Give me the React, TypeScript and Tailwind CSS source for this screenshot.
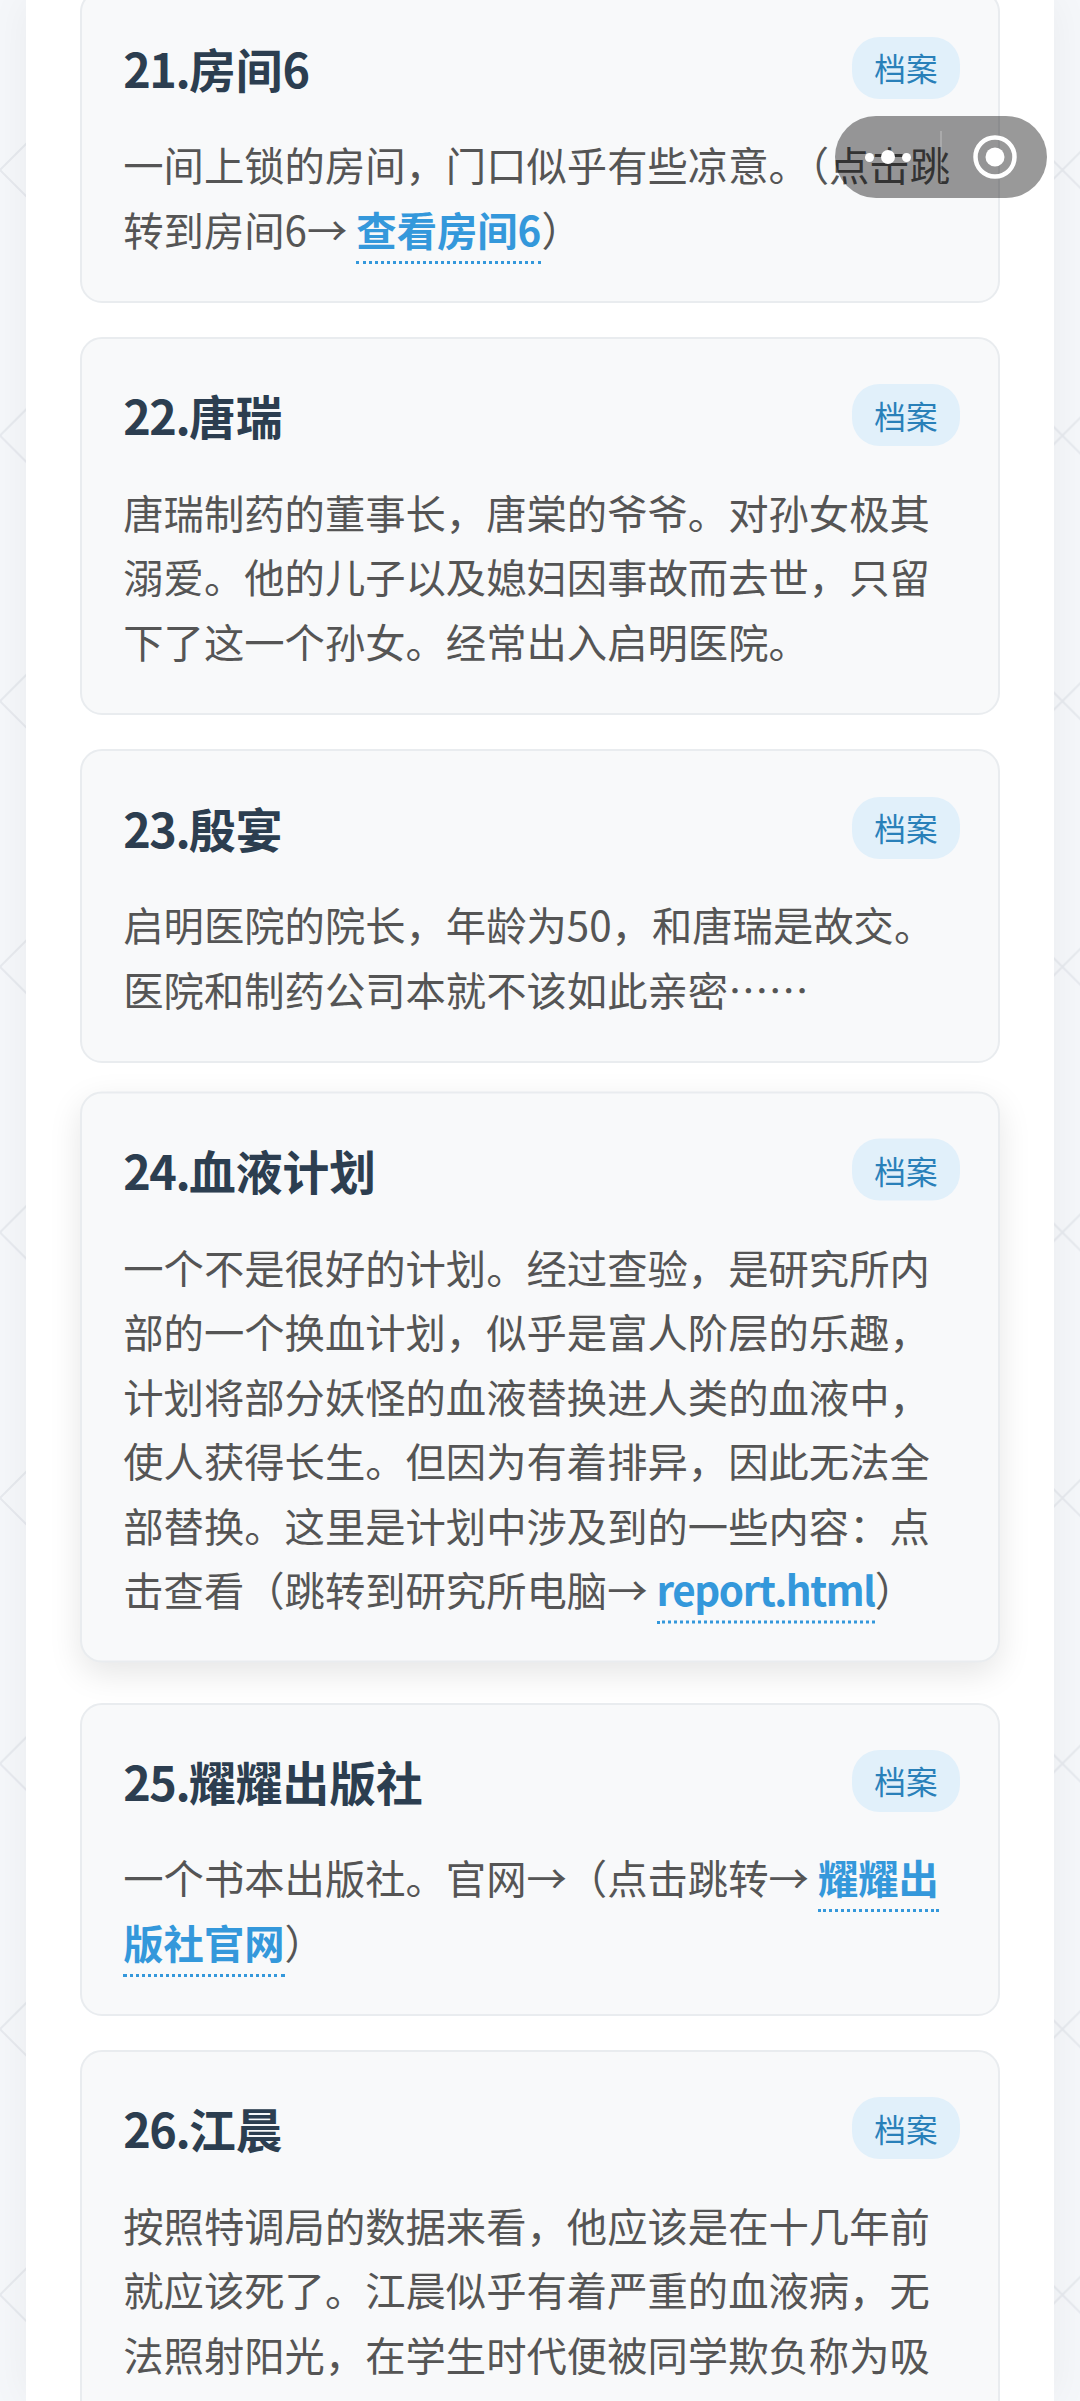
import type { ReactNode } from "react";

const font = "font-['Noto_Sans_CJK_SC','Noto_Sans',sans-serif]";

function Lnk({ children }: { children: ReactNode }) {
  return <span className="font-bold text-[#3498db] border-b-[3px] pb-[3px] border-dotted border-[#3498db]">{children}</span>;
}

function Card({ no, title, children, hover }: { no: string; title: string; children: ReactNode; hover?: boolean }) {
  return (
    <div
      className={
        hover
          ? "rounded-[22px] border-[2.75px] border-[#e9ecef] bg-[#f8f9fa] pl-[41.25px] pr-[38.5px] pt-[41.25px] pb-[39.5px] -translate-y-[5.5px] shadow-[0_11px_33px_rgba(0,0,0,0.1)]"
          : "rounded-[22px] border-[2.75px] border-[#e9ecef] bg-[#f8f9fa] pl-[41.25px] pr-[38.5px] pt-[41.25px] pb-[39.5px]"
      }
    >
      <div className="flex items-center justify-between mb-[29.5px]">
        <h3 className="text-[46.75px] leading-[70px] font-bold text-[#2c3e50]">
          <span className="tracking-[-1.5px]">{no}</span>
          {title}
        </h3>
        <span className="shrink-0 rounded-[27.5px] bg-[#e1f0fa] px-[22px] py-[5.5px] text-[31.6px] leading-[51px] text-[#2980b9]">档案</span>
      </div>
      <p className="text-[40.33px] leading-[64.5px] text-[#555555]">{children}</p>
    </div>
  );
}

function Capsule() {
  return (
    <div className="absolute left-[835px] top-[116px] flex h-[82px] w-[212px] items-center rounded-[41px] bg-black/40">
      <div className="flex w-[105px] items-center justify-center gap-[7px]">
        <span className="h-[9px] w-[9px] rounded-full bg-white" />
        <span className="h-[14px] w-[14px] rounded-full bg-white" />
        <span className="h-[9px] w-[9px] rounded-full bg-white" />
      </div>
      <span className="h-[52px] w-[1.5px] bg-white/20" />
      <svg width="46" height="46" viewBox="0 0 46 46" className="ml-[30px]">
        <circle cx="23" cy="23" r="19.5" fill="none" stroke="#fff" strokeWidth="4.5" />
        <circle cx="23" cy="23" r="9.5" fill="#fff" />
      </svg>
    </div>
  );
}

export default function App() {
  return (
    <div className={`relative h-[2401px] w-[1080px] overflow-hidden bg-[#f5f7fa] ${font}`}>
      <svg className="absolute inset-0" width="1080" height="2401">
        <defs>
          <pattern id="lattice" x="0" y="170" width="265.6" height="265.6" patternUnits="userSpaceOnUse">
            <path d="M0 0L265.6 265.6M265.6 0L0 265.6" stroke="#e6e9ee" strokeWidth="2" fill="none" />
          </pattern>
        </defs>
        <rect width="1080" height="2401" fill="url(#lattice)" />
      </svg>

      <div className="relative mx-[26px] flex h-full flex-col bg-white px-[54px] shadow-[0_0_40px_rgba(0,0,0,0.05)]">
        <div className="-mt-[10.5px] flex shrink-0 flex-col gap-[34.4px]">
          <Card no="21." title="房间6">
            一间上锁的房间，门口似乎有些凉意。（点击跳转到房间6→ <Lnk>查看房间6</Lnk>）
          </Card>
          <Card no="22." title="唐瑞">
            唐瑞制药的董事长，唐棠的爷爷。对孙女极其溺爱。他的儿子以及媳妇因事故而去世，只留下了这一个孙女。经常出入启明医院。
          </Card>
          <Card no="23." title="殷宴">
            启明医院的院长，年龄为50，和唐瑞是故交。医院和制药公司本就不该如此亲密……
          </Card>
          <Card no="24." title="血液计划" hover>
            一个不是很好的计划。经过查验，是研究所内部的一个换血计划，似乎是富人阶层的乐趣，计划将部分妖怪的血液替换进人类的血液中，使人获得长生。但因为有着排异，因此无法全部替换。这里是计划中涉及到的一些内容：点击查看（跳转到研究所电脑→ <Lnk><span className="tracking-[-1.4px]">report.html</span></Lnk>）
          </Card>
          <Card no="25." title="耀耀出版社">
            一个书本出版社。官网→（点击跳转→ <Lnk>耀耀出版社官网</Lnk>）
          </Card>
          <Card no="26." title="江晨">
            按照特调局的数据来看，他应该是在十几年前就应该死了。江晨似乎有着严重的血液病，无法照射阳光，在学生时代便被同学欺负称为吸
          </Card>
        </div>
      </div>

      <Capsule />
    </div>
  );
}
